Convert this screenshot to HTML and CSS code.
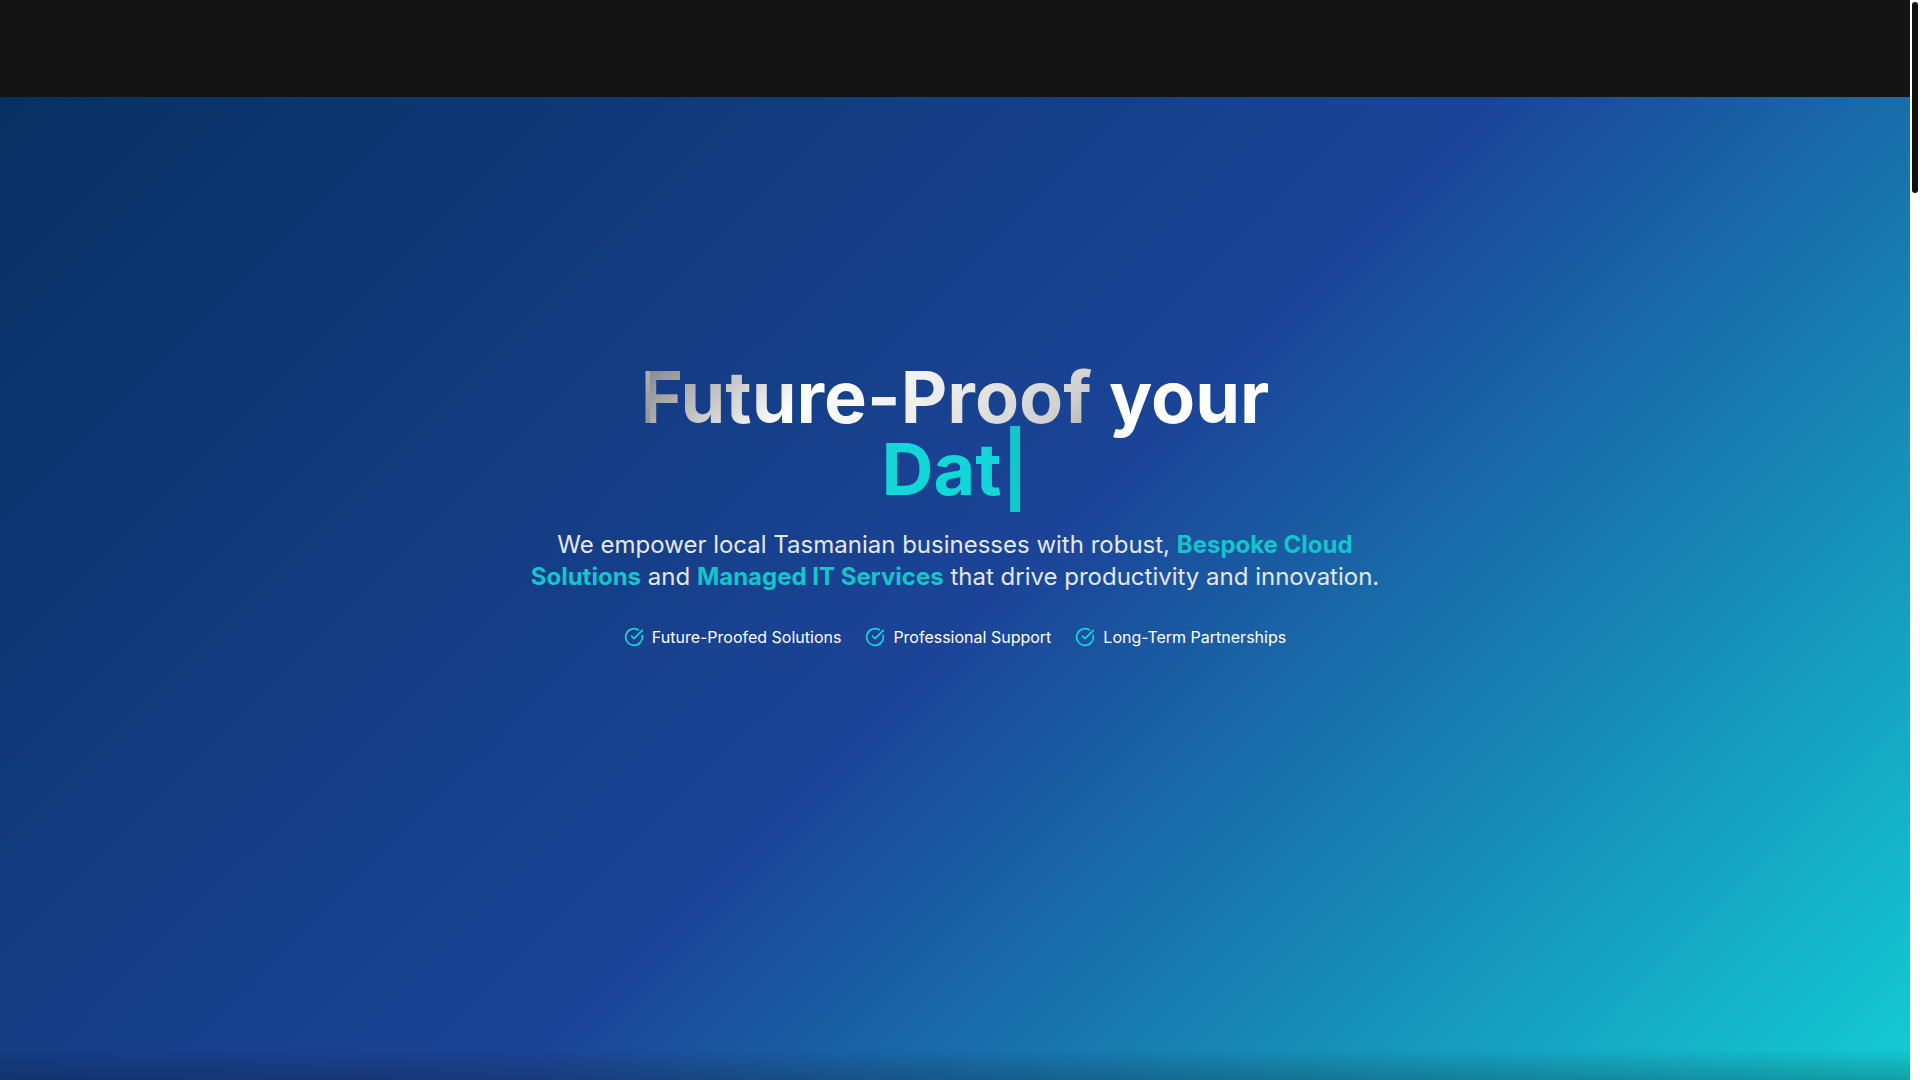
FILE: index.html
```html
<!DOCTYPE html>
<html lang="en">
<head>
    <meta charset="UTF-8">
    <meta name="viewport" content="width=device-width, initial-scale=1.0">
    <title>Managed IT Services Tasmania</title>
    <link rel="stylesheet" href="styles.css">
</head>
<body>
    <header class="site-header"></header>

    <main class="hero">
        <div class="hero-content">
            <h1>
                <span class="shiny">Future-Proof</span> your<br>
                <span class="typed">Dat</span><span class="cursor">|</span>
            </h1>
            <p class="lead">
                We empower local Tasmanian businesses with robust, <strong>Bespoke Cloud Solutions</strong>
                and <strong>Managed IT Services</strong> that drive productivity and innovation.
            </p>
            <ul class="features">
                <li>
                    <svg viewBox="0 0 24 24" aria-hidden="true"><path d="M21.801 10A10 10 0 1 1 17 3.335"/><path d="m9 11 3 3L22 4"/></svg>
                    <span>Future-Proofed Solutions</span>
                </li>
                <li>
                    <svg viewBox="0 0 24 24" aria-hidden="true"><path d="M21.801 10A10 10 0 1 1 17 3.335"/><path d="m9 11 3 3L22 4"/></svg>
                    <span>Professional Support</span>
                </li>
                <li>
                    <svg viewBox="0 0 24 24" aria-hidden="true"><path d="M21.801 10A10 10 0 1 1 17 3.335"/><path d="m9 11 3 3L22 4"/></svg>
                    <span>Long-Term Partnerships</span>
                </li>
            </ul>
        </div>
        <div class="hero-fade"></div>
    </main>

    <div class="scroll-track"><div class="scroll-thumb"></div></div>
</body>
</html>
```
FILE: styles.css
```css
/* General Styles */
* {
    box-sizing: border-box;
}

body {
    margin: 0;
    padding-right: 10px;
    height: 100vh;
    overflow: hidden;
    background: white;
    color: white;
    font-family: Inter, "Liberation Sans", sans-serif;
}

.site-header {
    height: 97px;
    background: #141414;
}

/* Hero */
.hero {
    position: relative;
    min-height: 100vh;
    padding: 264px 24px 0;
    background: linear-gradient(135deg, #083062, #1b4498 50%, #12d6d8);
}

.hero-content {
    max-width: 896px;
    margin: 0 auto;
    text-align: center;
}

h1 {
    margin: 0 0 24px;
    font-size: 72px;
    line-height: 72px;
    font-weight: 700;
}

.shiny {
    color: transparent;
    background: linear-gradient(135deg, #808080, #fff 33%, #ececec 56%, #d0d0d0 78%, #888) 9px 0 / 510px 100%;
    -webkit-background-clip: text;
    background-clip: text;
}

.typed {
    color: #12d6d8;
}

.cursor {
    color: #12c6cc;
}

.lead {
    margin: 0 0 32px;
    font-size: 24px;
    line-height: 32px;
    color: #e5e7eb;
}

.lead strong {
    font-weight: 700;
    color: #12c6cc;
}

.features {
    display: flex;
    flex-wrap: wrap;
    justify-content: center;
    gap: 24px;
    margin: 0;
    padding: 0;
    list-style: none;
    font-size: 16px;
    line-height: 24px;
}

.features li {
    display: flex;
    align-items: center;
    gap: 8px;
}

.features svg {
    width: 20px;
    height: 20px;
    fill: none;
    stroke: #12d6d8;
    stroke-width: 2;
    stroke-linecap: round;
    stroke-linejoin: round;
}

.hero-fade {
    position: absolute;
    left: 0;
    right: 0;
    bottom: 0;
    height: 128px;
    background: linear-gradient(to top, #141414, transparent);
}

/* Scrollbar */
.scroll-track {
    position: fixed;
    top: 0;
    right: 0;
    bottom: 0;
    width: 10px;
    padding: 2px;
    background: white;
}

.scroll-thumb {
    height: 191px;
    border-radius: 3px;
    background: #111;
}
```
